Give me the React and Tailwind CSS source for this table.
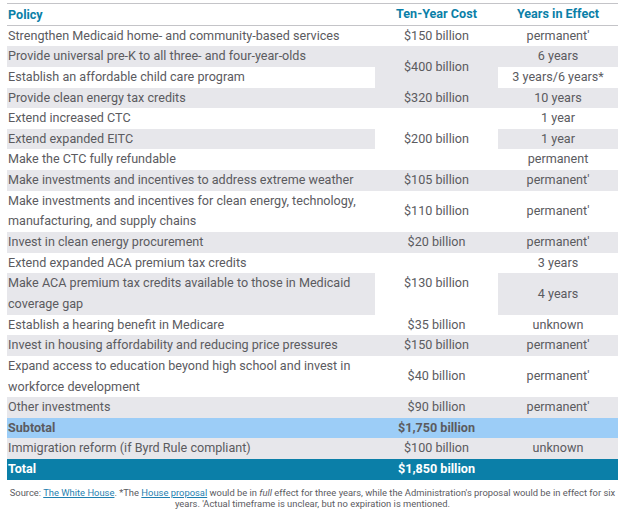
const G = "bg-[#e7e7eb]";
const W = "bg-white";

const rows = [
    { p: "Strengthen Medicaid home- and community-based services", c: "$150 billion", y: "permanent'", bg: W },
    { p: "Provide universal pre-K to all three- and four-year-olds", c: "$400 billion", cSpan: 2, cBg: G, y: "6 years", bg: G },
    { p: "Establish an affordable child care program", y: "3 years/6 years*", bg: W },
    { p: "Provide clean energy tax credits", c: "$320 billion", y: "10 years", bg: G },
    { p: "Extend increased CTC", c: "$200 billion", cSpan: 3, cBg: W, y: "1 year", bg: W },
    { p: "Extend expanded EITC", y: "1 year", bg: G },
    { p: "Make the CTC fully refundable", y: "permanent", bg: W },
    { p: "Make investments and incentives to address extreme weather", c: "$105 billion", y: "permanent'", bg: G },
    { p: ["Make investments and incentives for clean energy, technology,", "manufacturing, and supply chains"], c: "$110 billion", y: "permanent'", bg: W },
    { p: "Invest in clean energy procurement", c: "$20 billion", y: "permanent'", bg: G },
    { p: "Extend expanded ACA premium tax credits", c: "$130 billion", cSpan: 2, cBg: W, y: "3 years", bg: W },
    { p: ["Make ACA premium tax credits available to those in Medicaid", "coverage gap"], y: "4 years", bg: G },
    { p: "Establish a hearing benefit in Medicare", c: "$35 billion", y: "unknown", bg: W },
    { p: "Invest in housing affordability and reducing price pressures", c: "$150 billion", y: "permanent'", bg: G },
    { p: ["Expand access to education beyond high school and invest in", "workforce development"], c: "$40 billion", y: "permanent'", bg: W },
    { p: "Other investments", c: "$90 billion", y: "permanent'", bg: G },
];

export default function App() {
    return (
        <div className="w-[624px] h-[510px] bg-white text-[#5b5b5f]" style={{ fontFamily: "Roboto, 'Liberation Sans', sans-serif" }}>
            <div className="pt-[3px] pl-[7px] pr-[6px]">
                <table className="w-[611px] border-collapse table-fixed text-[12.6px] leading-[20.64px] whitespace-nowrap">
                    <colgroup>
                        <col className="w-[368px]" />
                        <col className="w-[123px]" />
                        <col className="w-[120px]" />
                    </colgroup>
                    <thead>
                        <tr className="border-y-[1.5px] border-[#c4c4c8] text-[#0b7fa8] font-bold text-[12.6px]">
                            <th className="text-left pl-[1px] h-[21px] leading-[19px]">Policy</th>
                            <th className="text-center">Ten-Year Cost</th>
                            <th className="text-center">Years in Effect</th>
                        </tr>
                    </thead>
                    <tbody>
                        {rows.map((r, i) => (
                            <tr key={i}>
                                <td className={`${r.bg} pl-[1px] align-middle`}>
                                    {Array.isArray(r.p) ? (
                                        <>
                                            {r.p[0]}
                                            <br />
                                            {r.p[1]}
                                        </>
                                    ) : (
                                        r.p
                                    )}
                                </td>
                                {r.c && (
                                    <td rowSpan={r.cSpan || 1} className={`${r.cBg || r.bg} text-center align-middle`}>{r.c}</td>
                                )}
                                <td className={`${r.bg} text-center align-middle`}>{r.y}</td>
                            </tr>
                        ))}
                        <tr className="bg-[#9ccdf7] font-bold">
                            <td className="pl-[1px]">Subtotal</td>
                            <td className="text-center">$1,750 billion</td>
                            <td></td>
                        </tr>
                        <tr className={G}>
                            <td className="pl-[1px]">Immigration reform (if Byrd Rule compliant)</td>
                            <td className="text-center">$100 billion</td>
                            <td className="text-center">unknown</td>
                        </tr>
                        <tr className="bg-[#0b7fa8] text-white font-bold">
                            <td className="pl-[1px]">Total</td>
                            <td className="text-center">$1,850 billion</td>
                            <td></td>
                        </tr>
                    </tbody>
                </table>
                <p className="mt-[7px] text-center text-[9.4px] leading-[11px] whitespace-nowrap">
                    Source: <span className="text-[#1f7fb0] underline">The White House</span>. *The{" "}
                    <span className="text-[#1f7fb0] underline">House proposal</span> would be in <i>full</i> effect for three years, while the Administration's proposal would be in effect for six
                    <br />
                    years. 'Actual timeframe is unclear, but no expiration is mentioned.
                </p>
            </div>
        </div>
    );
}
